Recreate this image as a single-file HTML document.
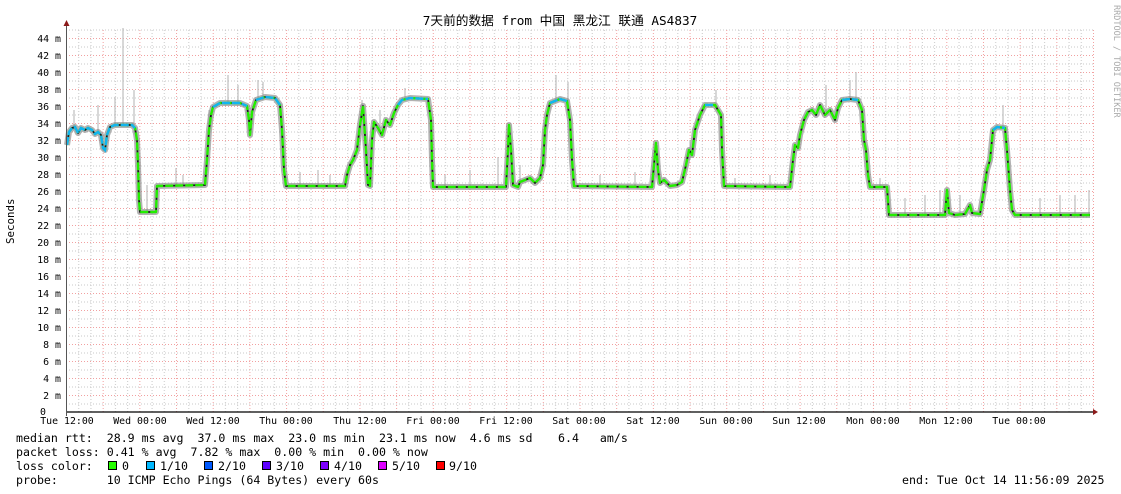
<!DOCTYPE html>
<html><head><meta charset="utf-8"><style>
html,body{margin:0;padding:0;background:#fff;width:1121px;height:494px;overflow:hidden}
svg{display:block}
text{font-family:"DejaVu Sans Mono","Liberation Mono","Noto Sans CJK SC",monospace;font-size:11.6px;fill:#000;white-space:pre}
.t text{font-size:9.9px}
</style></head><body>
<svg width="1121" height="494" viewBox="0 0 1121 494" xmlns="http://www.w3.org/2000/svg">
<defs>
<pattern id="vg" patternUnits="userSpaceOnUse" x="66" y="0" width="36.679" height="3">
<rect x="12.23" y="0" width="1" height="1" fill="#c8c8c8"/>
<rect x="24.45" y="0" width="1" height="1" fill="#c8c8c8"/>
</pattern>
<pattern id="vr" patternUnits="userSpaceOnUse" x="66" y="0" width="36.679" height="3">
<rect x="0" y="0" width="1" height="1" fill="#f2a0a0"/>
</pattern>
<pattern id="hg" patternUnits="userSpaceOnUse" x="0" y="38" width="3" height="17">
<rect x="0" y="8.5" width="1" height="1" fill="#c8c8c8"/>
</pattern>
<pattern id="hr" patternUnits="userSpaceOnUse" x="0" y="38" width="3" height="17">
<rect x="0" y="0" width="1" height="1" fill="#f2a0a0"/>
</pattern>
<polyline id="med" fill="none" stroke-linejoin="round" points="67,145 69,132 72,128 75,127 78,133 81,128 85,130 88,128 92,130 95,134 98,132 101,135 103,148 105,150 107,135 110,127 115,125 132,125 135,128 137,140 138,165 139,200 140,212 156,212 157,186 205,185 207,160 209,130 211,115 213,107 220,103 240,103 247,106 249,120 250,135 252,112 256,100 265,97 275,98 280,105 282,130 284,170 286,186 345,186 347,175 350,165 353,160 357,150 360,125 363,106 366,150 368,185 370,186 372,140 374,122 378,128 382,135 386,120 390,125 394,113 398,105 402,100 410,98 428,99 431,120 432,160 433,187 506,187 508,150 509,125 511,150 513,185 518,187 520,182 525,180 530,178 535,183 540,178 543,165 545,130 547,115 550,103 560,99 567,101 570,120 572,160 574,186 652,187 654,165 656,143 658,170 660,183 664,180 670,186 677,185 682,182 686,165 689,150 692,155 695,130 700,115 705,105 715,105 721,115 722,150 724,186 790,187 793,160 795,145 798,148 800,135 804,120 808,112 812,110 816,115 820,105 825,115 830,110 835,120 838,108 842,100 850,99 858,100 862,110 864,140 866,150 868,175 870,187 887,187 889,215 945,215 947,190 949,213 955,215 965,214 970,205 972,213 980,214 984,190 987,170 990,160 993,130 997,127 1005,128 1007,150 1010,190 1012,210 1015,215 1090,215"/>
</defs>
<rect x="0" y="0" width="1121" height="494" fill="#fff"/>
<rect x="66" y="28" width="1028" height="384" fill="url(#vg)"/>
<rect x="66" y="28" width="1028" height="384" fill="url(#hg)"/>
<rect x="66" y="28" width="1028" height="384" fill="url(#hr)"/>
<rect x="67" y="28" width="1027" height="384" fill="url(#vr)"/>
<text x="560" y="25" text-anchor="middle" style="font-size:12.7px">7天前的数据 from 中国 黑龙江 联通 AS4837</text>
<text transform="translate(1114,5) rotate(90)" style="font-size:8.5px;fill:#aaa">RRDTOOL / TOBI OETIKER</text>
<text transform="translate(14,244) rotate(-90)" style="font-size:10.8px">Seconds</text>
<g text-anchor="end" class="t">
<text x="61" y="42">44 m</text><text x="61" y="59">42 m</text><text x="61" y="76">40 m</text><text x="61" y="93">38 m</text><text x="61" y="110">36 m</text><text x="61" y="127">34 m</text><text x="61" y="144">32 m</text><text x="61" y="161">30 m</text><text x="61" y="178">28 m</text><text x="61" y="195">26 m</text><text x="61" y="212">24 m</text><text x="61" y="229">22 m</text><text x="61" y="246">20 m</text><text x="61" y="263">18 m</text><text x="61" y="280">16 m</text><text x="61" y="297">14 m</text><text x="61" y="314">12 m</text><text x="61" y="331">10 m</text><text x="61" y="348">8 m</text><text x="61" y="365">6 m</text><text x="61" y="382">4 m</text><text x="61" y="399">2 m</text><text x="46" y="415">0</text>
</g>
<g text-anchor="middle" class="t">
<text x="67" y="424">Tue 12:00</text><text x="140" y="424">Wed 00:00</text><text x="213" y="424">Wed 12:00</text><text x="286" y="424">Thu 00:00</text><text x="360" y="424">Thu 12:00</text><text x="433" y="424">Fri 00:00</text><text x="506" y="424">Fri 12:00</text><text x="579" y="424">Sat 00:00</text><text x="653" y="424">Sat 12:00</text><text x="726" y="424">Sun 00:00</text><text x="799" y="424">Sun 12:00</text><text x="873" y="424">Mon 00:00</text><text x="946" y="424">Mon 12:00</text><text x="1019" y="424">Tue 00:00</text>
</g>
<!-- spikes -->
<g stroke="#bdbdbd" stroke-width="1.2">
<line x1="123" y1="28" x2="123" y2="125"/><line x1="115" y1="97" x2="115" y2="125"/><line x1="134" y1="90" x2="134" y2="125"/><line x1="98" y1="105" x2="98" y2="132"/><line x1="74" y1="110" x2="74" y2="130"/>
<line x1="147" y1="185" x2="147" y2="212"/><line x1="176" y1="168" x2="176" y2="186"/><line x1="183" y1="175" x2="183" y2="186"/>
<line x1="228" y1="75" x2="228" y2="103"/><line x1="238" y1="85" x2="238" y2="103"/><line x1="258" y1="80" x2="258" y2="100"/><line x1="263" y1="82" x2="263" y2="100"/><line x1="209" y1="110" x2="209" y2="130"/>
<line x1="300" y1="172" x2="300" y2="186"/><line x1="318" y1="170" x2="318" y2="186"/><line x1="330" y1="175" x2="330" y2="186"/><line x1="362" y1="100" x2="362" y2="120"/><line x1="380" y1="110" x2="380" y2="128"/><line x1="405" y1="88" x2="405" y2="100"/>
<line x1="445" y1="175" x2="445" y2="187"/><line x1="470" y1="170" x2="470" y2="187"/><line x1="498" y1="157" x2="498" y2="187"/><line x1="556" y1="75" x2="556" y2="100"/><line x1="568" y1="82" x2="568" y2="101"/><line x1="520" y1="165" x2="520" y2="183"/>
<line x1="600" y1="175" x2="600" y2="187"/><line x1="635" y1="172" x2="635" y2="187"/><line x1="690" y1="140" x2="690" y2="160"/><line x1="716" y1="90" x2="716" y2="106"/><line x1="735" y1="178" x2="735" y2="187"/><line x1="770" y1="175" x2="770" y2="187"/>
<line x1="826" y1="85" x2="826" y2="112"/><line x1="850" y1="80" x2="850" y2="99"/><line x1="856" y1="72" x2="856" y2="100"/><line x1="880" y1="178" x2="880" y2="187"/>
<line x1="905" y1="198" x2="905" y2="215"/><line x1="925" y1="195" x2="925" y2="215"/><line x1="940" y1="190" x2="940" y2="215"/><line x1="960" y1="195" x2="960" y2="215"/><line x1="1003" y1="105" x2="1003" y2="127"/><line x1="1040" y1="198" x2="1040" y2="215"/><line x1="1060" y1="195" x2="1060" y2="215"/><line x1="1075" y1="195" x2="1075" y2="215"/><line x1="1089" y1="190" x2="1089" y2="215"/>
</g>
<use href="#med" stroke="#888" stroke-opacity="0.65" stroke-width="6"/>
<use href="#med" stroke="#1a1a1a" stroke-width="1.8"/>
<use href="#med" stroke="#22ee00" stroke-width="2.4" stroke-dasharray="8 2"/>
<g fill="none" stroke="#12b4f0" stroke-width="2.4" stroke-dasharray="8 2">
<polyline points="67,145 69,132 72,128 75,127 78,133 81,128 85,130 88,128 92,130 95,134 98,132 101,135 103,148 105,150 107,135 110,127 115,125 132,125 135,128"/>
<polyline points="213,107 220,103 240,103 247,106"/>
<polyline points="256,100 265,97 275,98 280,105"/>
<polyline points="398,105 402,100 410,98 428,99"/>
<polyline points="550,103 560,99 567,101"/>
<polyline points="705,105 715,105"/>
<polyline points="842,100 850,99 858,100"/>
<polyline points="993,130 997,127 1005,128"/>
</g>
<!-- axes -->
<line x1="67" y1="412" x2="1094" y2="412" stroke="#000" stroke-width="1.3"/>
<line x1="66.5" y1="24" x2="66.5" y2="416" stroke="#555" stroke-width="1"/>
<polygon points="1093,409 1098,412 1093,415" fill="#8b1a1a"/>
<polygon points="63.5,26 66.5,20 69.5,26" fill="#8b1a1a"/>
<text x="16" y="442">median rtt:  28.9 ms avg  37.0 ms max  23.0 ms min  23.1 ms now  4.6 ms sd</text>
<text x="558" y="442">6.4   am/s</text>
<text x="16" y="456">packet loss: 0.41 % avg  7.82 % max  0.00 % min  0.00 % now</text>
<text x="16" y="470">loss color:</text>
<text x="16" y="484">probe:       10 ICMP Echo Pings (64 Bytes) every 60s</text>
<text x="902" y="484">end: Tue Oct 14 11:56:09 2025</text>
<g stroke="#000" stroke-width="1">
<rect x="108.5" y="461.5" width="8" height="8" fill="#26ff00"/>
<rect x="146.5" y="461.5" width="8" height="8" fill="#00b8ff"/>
<rect x="204.5" y="461.5" width="8" height="8" fill="#0059ff"/>
<rect x="262.5" y="461.5" width="8" height="8" fill="#5e00ff"/>
<rect x="320.5" y="461.5" width="8" height="8" fill="#7e00ff"/>
<rect x="378.5" y="461.5" width="8" height="8" fill="#dd00ff"/>
<rect x="436.5" y="461.5" width="8" height="8" fill="#ff0000"/>
</g>
<text x="122" y="470">0</text><text x="160" y="470">1/10</text><text x="218" y="470">2/10</text><text x="276" y="470">3/10</text><text x="334" y="470">4/10</text><text x="392" y="470">5/10</text><text x="449" y="470">9/10</text>
</svg>
</body></html>
